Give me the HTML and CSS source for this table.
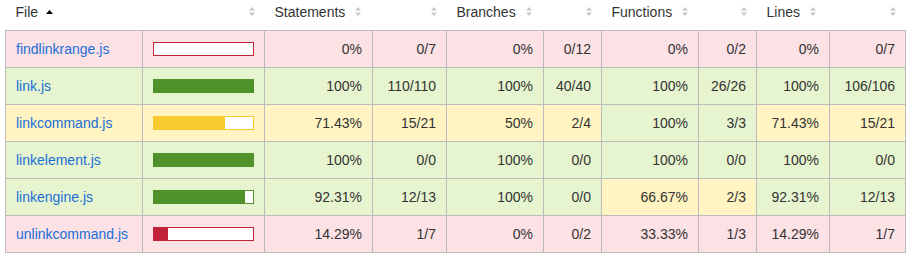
FILE: index.html
```html
<!DOCTYPE html>
<html>
<head>
<meta charset="utf-8">
<link rel="stylesheet" href="styles.css">
</head>
<body>
<table class="coverage">
  <colgroup>
    <col class="c-file"><col class="c-bar"><col class="c-pct1"><col class="c-abs1">
    <col class="c-pct2"><col class="c-abs2"><col class="c-pct3"><col class="c-abs3">
    <col class="c-pct4"><col class="c-abs4">
  </colgroup>
  <thead>
    <tr>
      <th class="hl">File <span class="sorter active"><svg width="7" height="4" viewBox="0 0 7 4"><path d="M0 4 L3.5 0 L7 4 Z" fill="#000"/></svg></span></th>
      <th class="hr"><span class="sorter"><svg width="6" height="9" viewBox="0 0 6 9"><path d="M0 3.5 L3 0 L6 3.5 Z M0 5.5 L3 9 L6 5.5 Z" fill="#c8c8c8"/></svg></span></th>
      <th class="hl">Statements <span class="sorter"><svg width="6" height="9" viewBox="0 0 6 9"><path d="M0 3.5 L3 0 L6 3.5 Z M0 5.5 L3 9 L6 5.5 Z" fill="#c8c8c8"/></svg></span></th>
      <th class="hr"><span class="sorter"><svg width="6" height="9" viewBox="0 0 6 9"><path d="M0 3.5 L3 0 L6 3.5 Z M0 5.5 L3 9 L6 5.5 Z" fill="#c8c8c8"/></svg></span></th>
      <th class="hl">Branches <span class="sorter"><svg width="6" height="9" viewBox="0 0 6 9"><path d="M0 3.5 L3 0 L6 3.5 Z M0 5.5 L3 9 L6 5.5 Z" fill="#c8c8c8"/></svg></span></th>
      <th class="hr"><span class="sorter"><svg width="6" height="9" viewBox="0 0 6 9"><path d="M0 3.5 L3 0 L6 3.5 Z M0 5.5 L3 9 L6 5.5 Z" fill="#c8c8c8"/></svg></span></th>
      <th class="hl">Functions <span class="sorter"><svg width="6" height="9" viewBox="0 0 6 9"><path d="M0 3.5 L3 0 L6 3.5 Z M0 5.5 L3 9 L6 5.5 Z" fill="#c8c8c8"/></svg></span></th>
      <th class="hr"><span class="sorter"><svg width="6" height="9" viewBox="0 0 6 9"><path d="M0 3.5 L3 0 L6 3.5 Z M0 5.5 L3 9 L6 5.5 Z" fill="#c8c8c8"/></svg></span></th>
      <th class="hl">Lines <span class="sorter"><svg width="6" height="9" viewBox="0 0 6 9"><path d="M0 3.5 L3 0 L6 3.5 Z M0 5.5 L3 9 L6 5.5 Z" fill="#c8c8c8"/></svg></span></th>
      <th class="hr"><span class="sorter"><svg width="6" height="9" viewBox="0 0 6 9"><path d="M0 3.5 L3 0 L6 3.5 Z M0 5.5 L3 9 L6 5.5 Z" fill="#c8c8c8"/></svg></span></th>
    </tr>
  </thead>
  <tbody>
    <tr>
      <td class="file low"><a href="#">findlinkrange.js</a></td>
      <td class="pic low"><div class="chart low"><div class="fill" style="width:0%"></div></div></td>
      <td class="num low">0%</td><td class="num low">0/7</td>
      <td class="num low">0%</td><td class="num low">0/12</td>
      <td class="num low">0%</td><td class="num low">0/2</td>
      <td class="num low">0%</td><td class="num low">0/7</td>
    </tr>
    <tr>
      <td class="file high"><a href="#">link.js</a></td>
      <td class="pic high"><div class="chart high"><div class="fill" style="width:100%"></div></div></td>
      <td class="num high">100%</td><td class="num high">110/110</td>
      <td class="num high">100%</td><td class="num high">40/40</td>
      <td class="num high">100%</td><td class="num high">26/26</td>
      <td class="num high">100%</td><td class="num high">106/106</td>
    </tr>
    <tr>
      <td class="file medium"><a href="#">linkcommand.js</a></td>
      <td class="pic medium"><div class="chart medium"><div class="fill" style="width:71.43%"></div></div></td>
      <td class="num medium">71.43%</td><td class="num medium">15/21</td>
      <td class="num medium">50%</td><td class="num medium">2/4</td>
      <td class="num high">100%</td><td class="num high">3/3</td>
      <td class="num medium">71.43%</td><td class="num medium">15/21</td>
    </tr>
    <tr>
      <td class="file high"><a href="#">linkelement.js</a></td>
      <td class="pic high"><div class="chart high"><div class="fill" style="width:100%"></div></div></td>
      <td class="num high">100%</td><td class="num high">0/0</td>
      <td class="num high">100%</td><td class="num high">0/0</td>
      <td class="num high">100%</td><td class="num high">0/0</td>
      <td class="num high">100%</td><td class="num high">0/0</td>
    </tr>
    <tr>
      <td class="file high"><a href="#">linkengine.js</a></td>
      <td class="pic high"><div class="chart high"><div class="fill" style="width:92.31%"></div></div></td>
      <td class="num high">92.31%</td><td class="num high">12/13</td>
      <td class="num high">100%</td><td class="num high">0/0</td>
      <td class="num medium">66.67%</td><td class="num medium">2/3</td>
      <td class="num high">92.31%</td><td class="num high">12/13</td>
    </tr>
    <tr>
      <td class="file low"><a href="#">unlinkcommand.js</a></td>
      <td class="pic low"><div class="chart low"><div class="fill" style="width:14.29%"></div></div></td>
      <td class="num low">14.29%</td><td class="num low">1/7</td>
      <td class="num low">0%</td><td class="num low">0/2</td>
      <td class="num low">33.33%</td><td class="num low">1/3</td>
      <td class="num low">14.29%</td><td class="num low">1/7</td>
    </tr>
  </tbody>
</table>
</body>
</html>
```
FILE: styles.css
```css
html, body {
  margin: 0;
  padding: 0;
  background: #fff;
}
body {
  font-family: "Liberation Sans", Arial, sans-serif;
  font-size: 14px;
  line-height: 16px;
  color: #333;
}
.coverage {
  margin-left: 5px;
  border-collapse: collapse;
  table-layout: fixed;
  width: 901px;
}
.c-file { width: 137px; }
.c-bar { width: 122px; }
.c-pct1 { width: 108px; }
.c-abs1 { width: 74px; }
.c-pct2 { width: 97px; }
.c-abs2 { width: 58px; }
.c-pct3 { width: 97px; }
.c-abs3 { width: 58px; }
.c-pct4 { width: 73px; }
.c-abs4 { width: 76px; }

.coverage th {
  height: 30px;
  padding: 4px 10px 10px;
  box-sizing: border-box;
  font-weight: normal;
  color: #333;
  vertical-align: top;
  white-space: nowrap;
}
.coverage th.hl { text-align: left; }
.coverage th.hr { text-align: right; }
.sorter {
  display: inline-block;
  vertical-align: middle;
  line-height: 0;
}
th.hl .sorter { margin-left: 6px; position: relative; top: -2px; }
th.hl .sorter.active { margin-left: 4px; top: -2px; }
th.hr .sorter { position: relative; top: -2px; }

.coverage td {
  border: 1px solid #bbb;
  padding: 10px;
  height: 16px;
  white-space: nowrap;
}
.coverage td.num { text-align: right; }
.coverage td a {
  color: #1a6fd6;
  text-decoration: none;
}
td.low { background: #fce1e5; }
td.medium { background: #fff4c2; }
td.high { background: #e6f5d0; }

.coverage td.pic { padding: 0 10px; }
.chart {
  box-sizing: border-box;
  width: 101px;
  height: 14px;
  background: #fff;
  border: 1px solid;
  display: flex;
}
.chart .fill { height: 100%; }
.chart.low { border-color: #c1233b; }
.chart.low .fill { background: #c1233b; }
.chart.medium { border-color: #f8ca2e; }
.chart.medium .fill { background: #f8ca2e; }
.chart.high { border-color: #4f922a; }
.chart.high .fill { background: #4f922a; }
```
